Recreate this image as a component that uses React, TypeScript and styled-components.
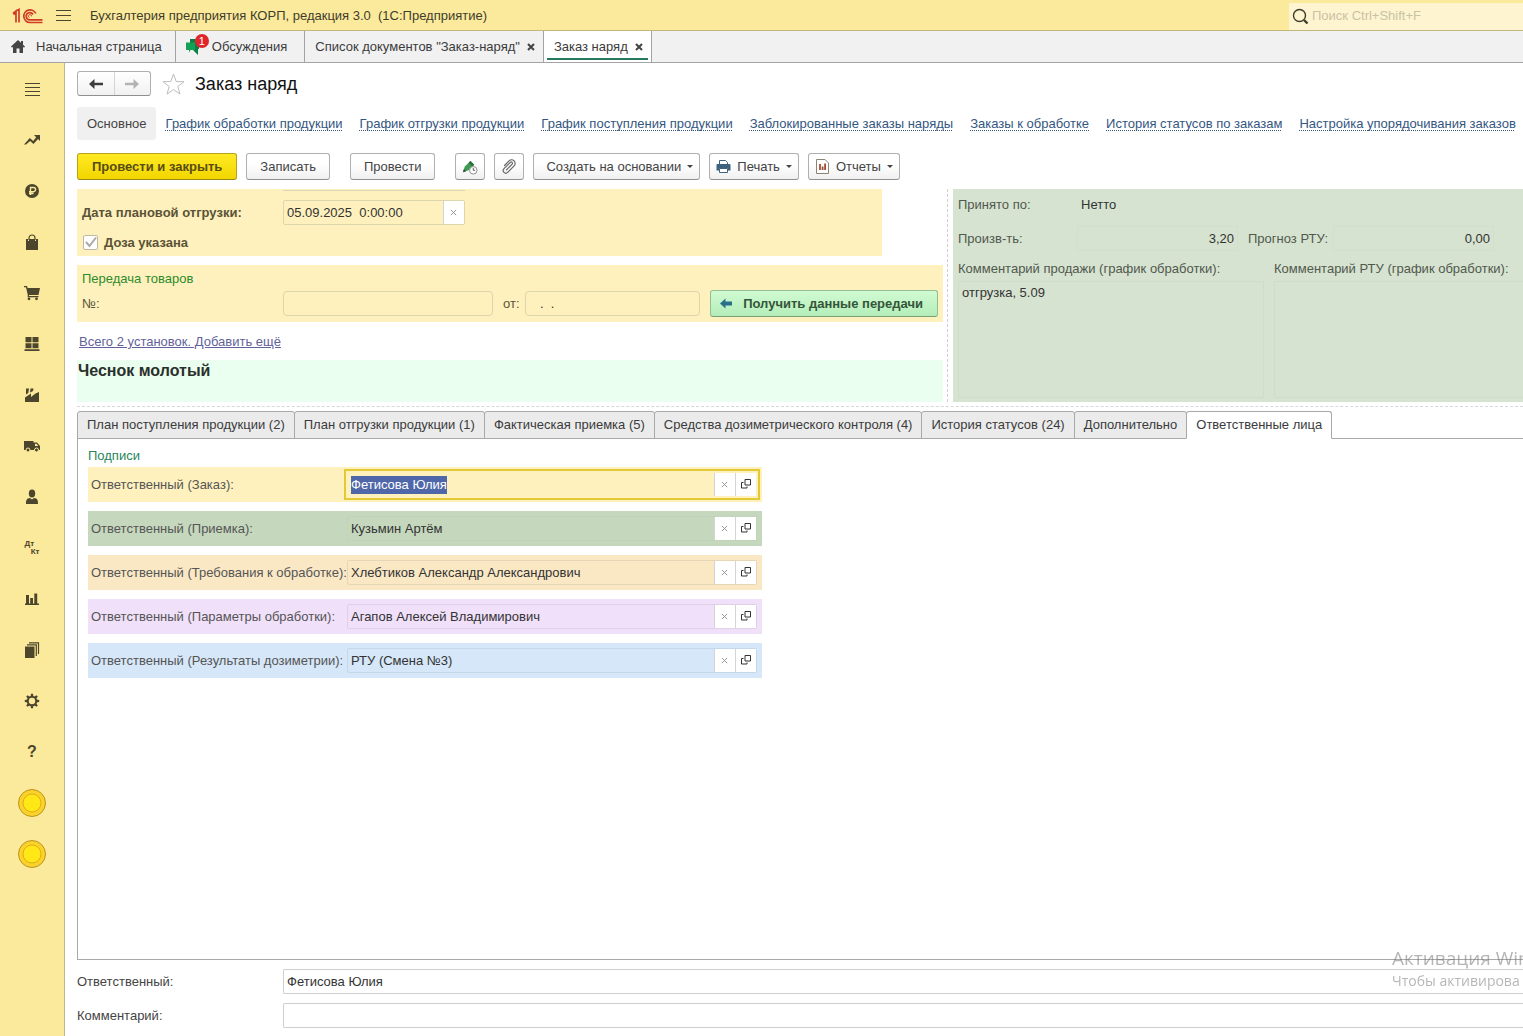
import React, { useEffect, useRef } from 'react';
import styled, { createGlobalStyle, css } from 'styled-components';

const GlobalStyle = createGlobalStyle`
  *, *::before, *::after { box-sizing: border-box; }
  body {
    margin: 0;
    background: #fff;
    color: #444;
    font: 13px/18px "Liberation Sans", Arial, sans-serif;
  }
  button, input, textarea { font: inherit; color: inherit; margin: 0; }
  button { cursor: pointer; }
  svg { display: block; flex: none; }
`;

/* ---------- frame ---------- */

const Page = styled.div`
  display: flex;
  flex-direction: column;
  min-height: 100vh;
  overflow: hidden;
`;

const TopBar = styled.header`
  display: flex;
  align-items: center;
  height: 31px;
  padding: 2px 0 0 12px;
  background: #fbea9b;
  border-bottom: 1px solid #c3b77c;
`;

const MenuButton = styled.button`
  display: flex;
  padding: 0;
  margin: 0 19px 0 13px;
  border: 0;
  background: none;
  color: #4b4733;
`;

const AppTitle = styled.div`
  flex: 1;
  white-space: pre;
  color: #3f3c2c;
`;

const SearchBox = styled.label`
  display: flex;
  align-items: center;
  gap: 3px;
  width: 234px;
  height: 27px;
  padding-left: 3px;
  background: #fef5d0;
  color: #3f3c2c;
`;

const SearchInput = styled.input`
  flex: 1;
  min-width: 0;
  padding: 0;
  border: 0;
  outline: 0;
  background: none;
  &::placeholder { color: #c9c2a4; opacity: 1; }
`;

const WindowTabs = styled.nav`
  display: flex;
  height: 32px;
  background: #f1f1f1;
  border-bottom: 1px solid #a3a3a3;
`;

const WindowTab = styled.div<{ $active?: boolean }>`
  position: relative;
  display: flex;
  align-items: center;
  padding: 0 8px 0 10px;
  border-right: 1px solid #a3a3a3;
  white-space: nowrap;
  ${p => p.$active && css`
    background: #fff;
    &::after {
      content: '';
      position: absolute;
      left: 3px;
      right: 3px;
      bottom: 2px;
      height: 2px;
      background: #26795c;
    }
  `}
`;

const TabLabel = styled.button<{ $pad?: number }>`
  display: flex;
  align-items: center;
  gap: 10px;
  padding: 0 ${p => p.$pad ?? 0}px 0 0;
  border: 0;
  background: none;
  color: #3b3b3b;
`;

const TabClose = styled.button`
  display: flex;
  padding: 0;
  margin-left: 7px;
  border: 0;
  background: none;
  color: #444;
`;

const ChatMark = styled.span`
  position: relative;
  display: block;
  width: 16px;
  height: 18px;
`;

const Count = styled.span`
  position: absolute;
  top: -4px;
  left: 9px;
  width: 14px;
  height: 14px;
  border-radius: 7px;
  background: #e0252b;
  color: #fff;
  font-size: 11px;
  line-height: 14px;
  text-align: center;
`;

const Body = styled.div`
  display: flex;
  flex: 1;
`;

const Sidebar = styled.nav`
  display: flex;
  flex: none;
  flex-direction: column;
  width: 65px;
  background: #fbea9b;
  border-right: 1px solid #bdb68f;
`;

const SideButton = styled.button`
  display: flex;
  align-items: center;
  justify-content: center;
  height: 51px;
  padding: 0;
  border: 0;
  background: none;
  color: #4b462c;
`;

const Main = styled.main`
  display: flex;
  flex: 1;
  flex-direction: column;
  min-width: 0;
  padding: 8px 0 8px 12px;
`;

/* ---------- heading, links, commands ---------- */

const Heading = styled.div`
  display: flex;
  align-items: center;
  height: 25px;
`;

const History = styled.div`
  display: flex;
  width: 74px;
  height: 25px;
  margin-right: 11px;
  border: 1px solid #b0b0b0;
  border-bottom-color: #8f8f8f;
  border-radius: 3px;
  background: linear-gradient(#fff, #f1f1f1);
`;

const HistoryButton = styled.button`
  display: flex;
  flex: 1;
  align-items: center;
  justify-content: center;
  padding: 0;
  border: 0;
  background: none;
  color: #3c3c3c;
  & + & { border-left: 1px solid #d5d5d5; color: #b3b3b3; }
`;

const Title = styled.h1`
  margin: 0 0 0 10px;
  color: #111;
  font-size: 18px;
  font-weight: 400;
  line-height: 24px;
`;

const Star = styled.button`
  display: flex;
  padding: 0;
  border: 0;
  background: none;
`;

const Sections = styled.nav`
  display: flex;
  align-items: center;
  gap: 17px;
  height: 33px;
  margin-top: 11px;
  white-space: nowrap;
`;

const CurrentSection = styled.span`
  padding: 0 9px 0 10px;
  margin-right: -7px;
  border-radius: 3px;
  background: #f0f0f0;
  line-height: 33px;
`;

const SectionLink = styled.a`
  color: #34567f;
  text-decoration: underline dotted 1px;
  text-decoration-skip-ink: none;
  text-underline-offset: 2px;
`;

const Commands = styled.div`
  display: flex;
  gap: 9px;
  margin-top: 13px;
`;

const Command = styled.button<{ $tone?: 'main' | 'green'; $gapAfter?: boolean; $square?: boolean }>`
  display: flex;
  align-items: center;
  justify-content: center;
  gap: 6px;
  height: 27px;
  padding: 0 ${p => (p.$square ? 6 : 13)}px;
  margin-right: ${p => (p.$gapAfter ? 11 : 0)}px;
  border: 1px solid #b0b0b0;
  border-bottom-color: #8f8f8f;
  border-radius: 3px;
  background: linear-gradient(#fff 40%, #f0f0f0);
  color: #444;
  white-space: nowrap;
  ${p => p.$tone === 'main' && css`
    padding: 0 14px;
    border-color: #b7a21c;
    border-bottom-color: #98860f;
    background: linear-gradient(#ffe923, #f2d600);
    color: #574c12;
    font-weight: 700;
  `}
  ${p => p.$tone === 'green' && css`
    gap: 11px;
    padding: 0 14px 0 9px;
    border-color: #93bd93;
    border-bottom-color: #76a076;
    background: linear-gradient(#d0fbd2, #b4edb9);
    color: #35553a;
    font-weight: 700;
  `}
`;

const DropCommand = styled(Command)`
  padding: 0 6px 0 ${p => (p.$square ? 6 : 12)}px;
`;

/* ---------- order form ---------- */

const FormArea = styled.section`
  display: flex;
  margin-top: 9px;
  padding-bottom: 4px;
  border-bottom: 1px dashed #d8d8d8;
`;

const OrderColumn = styled.div`
  flex: 0 0 871px;
  padding-right: 4px;
  border-right: 1px dashed #cfcfcf;
`;

const Band = styled.div<{ $inset?: boolean }>`
  display: flex;
  flex-direction: column;
  padding: ${p => (p.$inset ? '0 5px' : '5px')};
  margin-right: ${p => (p.$inset ? 61 : 0)}px;
  margin-bottom: ${p => (p.$inset ? 9 : 0)}px;
  background: #fef1bd;
`;

const FieldEdge = styled.div`
  width: 182px;
  height: 2px;
  margin: 0 0 9px 201px;
  border-bottom: 1px solid #ddd6b4;
`;

const FormRow = styled.div`
  display: flex;
  align-items: center;
`;

const RowLabel = styled.label<{ $bold?: boolean }>`
  flex: 0 0 201px;
  color: #5a5338;
  font-weight: ${p => (p.$bold ? 700 : 400)};
`;

const Field = styled.div<{ $width: number; $round?: boolean }>`
  display: flex;
  width: ${p => p.$width}px;
  height: 25px;
  border: 1px solid #ddd5ae;
  border-radius: ${p => (p.$round ? 4 : 2)}px;
`;

const TextInput = styled.input<{ $right?: boolean }>`
  flex: 1;
  width: 100%;
  min-width: 0;
  padding: 0 3px;
  border: 0;
  outline: 0;
  background: none;
  color: #333;
  text-align: ${p => (p.$right ? 'right' : 'left')};
  &::selection { background: #4f67a8; color: #fff; }
`;

const CellButton = styled.button<{ $dim?: boolean }>`
  display: flex;
  flex: 0 0 21px;
  align-items: center;
  justify-content: center;
  padding: 0 1px 1px 0;
  border: 0;
  border-left: 1px solid #d4d4d4;
  background: #fff;
  color: ${p => (p.$dim ? '#8a8a8a' : '#333')};
`;

const CheckRow = styled.label`
  display: flex;
  align-items: center;
  gap: 6px;
  padding: 9px 0 5px;
  color: #5a5338;
  font-weight: 700;
  line-height: 17px;
`;

const Check = styled.input`
  appearance: none;
  width: 15px;
  height: 15px;
  margin: 0 0 0 1px;
  border: 1px solid #bfb9a0;
  border-radius: 2px;
  background: #fff;
  &:checked {
    background: #fff url("data:image/svg+xml,%3Csvg xmlns='http://www.w3.org/2000/svg' viewBox='0 0 13 13'%3E%3Cpath d='M2 6l3.500 4L12 1.500' fill='none' stroke='%23aaa' stroke-width='2'/%3E%3C/svg%3E") center / 13px 13px no-repeat;
  }
`;

const GroupTitle = styled.h2`
  margin: 0;
  color: #2d8b2d;
  font-size: 13px;
  font-weight: 400;
  line-height: 18px;
`;

const TransferRow = styled(FormRow)`
  margin-top: 2px;
`;

const FromLabel = styled.label`
  flex: 1;
  padding-left: 10px;
  color: #5a5338;
`;

const TransferAction = styled.div`
  margin-left: 10px;
`;

const UnitsLine = styled.div`
  padding: 11px 2px 9px;
`;

const UnitsLink = styled.a`
  color: #62629a;
  text-decoration: underline;
`;

const Product = styled.div`
  min-height: 42px;
  padding-left: 1px;
  background: #eafff0;
  color: #2b2f2c;
  font-size: 16px;
  font-weight: 700;
  line-height: 21px;
`;

const PlanPanel = styled.div`
  display: flex;
  flex: 1;
  flex-direction: column;
  min-width: 0;
  margin-left: 5px;
  padding: 3px 0 4px 5px;
  background: #d6e3d0;
  color: #51584e;
`;

const PlanRow = styled.div`
  display: flex;
  align-items: center;
  height: 25px;
  margin-bottom: 9px;
`;

const PlanLabel = styled.label<{ $width: number }>`
  flex: 0 0 ${p => p.$width}px;
`;

const PlanField = styled.div<{ $plain?: boolean }>`
  display: flex;
  width: 161px;
  height: 25px;
  margin-right: 10px;
  border: 1px solid ${p => (p.$plain ? 'transparent' : '#d2dfcd')};
`;

const Comments = styled.div`
  display: grid;
  flex: 1;
  grid-template-columns: 306px 1fr;
  grid-template-rows: 18px 1fr;
  column-gap: 10px;
  row-gap: 3px;
`;

const CommentBox = styled.textarea<{ $open?: boolean }>`
  width: 100%;
  height: 100%;
  min-height: 0;
  padding: 2px 3px;
  border: 1px solid #cfdcc9;
  border-right-width: ${p => (p.$open ? 0 : 1)}px;
  outline: 0;
  resize: none;
  background: none;
  color: #333;
`;

/* ---------- tabs ---------- */

const Tabs = styled.div`
  display: flex;
  margin-top: 4px;
  white-space: nowrap;
`;

const Tab = styled.button<{ $active?: boolean }>`
  height: 28px;
  padding: 0 9px;
  margin-right: -1px;
  border: 1px solid #a8a8a8;
  border-bottom-color: ${p => (p.$active ? '#fff' : '#a8a8a8')};
  border-radius: 3px 3px 0 0;
  background: ${p => (p.$active ? '#fff' : '#ebebeb')};
  color: #3b3b3b;
`;

const TabPanel = styled.section`
  display: flex;
  flex: 1;
  flex-direction: column;
  gap: 9px;
  margin-top: -1px;
  padding: 8px 10px;
  border: 1px solid #a8a8a8;
  border-right: 0;
  position: relative;
  z-index: -1;
`;

const SignTitle = styled(GroupTitle)`
  margin-bottom: -7px;
  color: #26855a;
`;

const SignRow = styled.div<{ $bg: string }>`
  display: flex;
  align-items: center;
  width: 674px;
  height: 35px;
  padding: 0 5px 0 3px;
  background: ${p => p.$bg};
`;

const SignLabel = styled.label`
  flex: 0 0 256px;
  color: #555;
  white-space: nowrap;
`;

const SignField = styled.div<{ $line: string; $focused?: boolean }>`
  display: flex;
  width: 410px;
  height: 25px;
  border: 1px solid ${p => p.$line};
  border-radius: ${p => (p.$focused ? 0 : 2)}px;
  outline: ${p => (p.$focused ? '2px solid #e3c935' : 'none')};
  outline-offset: 1px;
`;

/* ---------- footer ---------- */

const Footer = styled.div`
  display: grid;
  grid-template-columns: 206px 1fr;
  align-items: center;
  row-gap: 9px;
  margin-top: 9px;
`;

const FooterInput = styled(TextInput)`
  height: 25px;
  border: 1px solid #cfcfcf;
  border-right: 0;
  border-radius: 2px 0 0 2px;
`;

const Watermark = styled.div`
  position: fixed;
  right: 0;
  bottom: 45px;
  width: 131px;
  color: rgba(110, 110, 110, 0.5);
  font-family: "Open Sans", "Noto Sans", sans-serif;
  font-size: 14px;
  line-height: 20px;
  white-space: nowrap;
  pointer-events: none;
`;

const WatermarkTitle = styled.div`
  font-size: 19px;
  line-height: 26px;
`;

/* ---------- drawings ---------- */

const Logo = () => (
  <svg width="31" height="17" viewBox="0 0 31 17" fill="none" stroke="#cf3b27" strokeWidth="1.700">
    <path d="M1 5.500 4 3v11.500M4 3l3-1.500v13M1.500 6.500 4 5" />
    <path d="M23.800 5.500A6.300 6.300 0 1 0 17.800 14.500H30.500" />
    <path d="M21 6.500A3.600 3.600 0 1 0 17.800 11.800H30.500" />
    <path d="M19.500 8.300a1.500 1.500 0 1 0-2 1.200" strokeWidth="1" />
  </svg>
);

const Lines = ({ rows }: { rows: number[] }) => (
  <svg width="15" height="16" viewBox="0 0 15 16" fill="currentColor">
    {rows.map(y => <rect key={y} x="0" y={y} width="15" height="1" />)}
  </svg>
);

const SearchIcon = () => (
  <svg width="17" height="17" viewBox="0 0 17 17" fill="none" stroke="currentColor">
    <circle cx="7.500" cy="7.500" r="6" strokeWidth="1.400" />
    <path d="m12 12 3.500 3.500" strokeWidth="2.400" />
  </svg>
);

const HomeIcon = () => (
  <svg width="16" height="14" viewBox="0 0 16 14" fill="#444">
    <path d="M8 0 1 6.600 2 7.700 3 6.800V13h3.500V8.500h3V13H13V6.800l1 .9 1-1.100-2-1.900V1h-2v1.800z" />
  </svg>
);

const ChatIcon = () => (
  <svg width="16" height="18" viewBox="0 0 16 18">
    <path d="M4 1h9v10h-1v6l-5-5H4z" fill="#0c7f45" />
    <path d="M0 4.500h9v7.500H4.500L3 14.500V12H0z" fill="#15a05a" />
  </svg>
);

const CrossIcon = ({ size = 8, width = 2 }: { size?: number; width?: number }) => (
  <svg width={size} height={size} viewBox="0 0 8 8" fill="none" stroke="currentColor" strokeWidth={width}>
    <path d="m1 1 6 6M7 1 1 7" />
  </svg>
);

const ArrowIcon = ({ flip }: { flip?: boolean }) => (
  <svg width="14" height="12" viewBox="0 0 14 12" fill="currentColor">
    <path d={flip ? 'M14 6 8.500 1v3.800H0v2.400h8.500V11z' : 'M0 6l5.500-5v3.800H14v2.400H5.500V11z'} />
  </svg>
);

const GetArrow = () => (
  <svg width="12" height="11" viewBox="0 0 12 11" fill="#2b7089">
    <path d="M0 5.500 5.500.5V3.500H12v4H5.500v3z" />
  </svg>
);

const StarIcon = () => (
  <svg width="23" height="22" viewBox="0 0 23 22" fill="#fff" stroke="#bdbdbd">
    <path d="m11.500 1 2.700 7.500 7.800.2-6.200 4.800 2.200 7.600-6.500-4.500L5 21.100l2.200-7.600L1 8.700l7.800-.2z" />
  </svg>
);

const PostIcon = () => (
  <svg width="16" height="16" viewBox="0 0 17 17">
    <path d="M1 14 3 8l6-6 4 4-6 6z" fill="#3f9a52" />
    <path d="M9 2l4 4-2 2-4-4z" fill="#2f7040" />
    <path d="m1 14 1-3.500L4.500 13z" fill="#38503b" />
    <circle cx="12" cy="12" r="4" fill="#fff" stroke="#888" />
    <path d="M12 9.500V12h2" fill="none" stroke="#555" />
  </svg>
);

const ClipIcon = () => (
  <svg width="16" height="16" viewBox="0 0 16 16" fill="none" stroke="#666" strokeWidth="1.200" strokeLinecap="round">
    <path d="m5.500 10.800 5.600-5.700a1.200 1.200 0 0 0-1.800-1.800L3 9.700a2.600 2.600 0 0 0 3.700 3.700l6.400-6.500a3.500 3.500 0 0 0-5-5L3.500 6.500" />
  </svg>
);

const PrintIcon = () => (
  <svg width="15" height="15" viewBox="0 0 15 15">
    <path d="M3.500 5V1.500h6l2 2V5" fill="#fff" stroke="#41627a" />
    <path d="M1.500 5h12a1 1 0 0 1 1 1v5.500h-3V9h-8v2.500h-3V6a1 1 0 0 1 1-1z" fill="#3d627d" />
    <path d="M3.500 9.500h8v4h-8z" fill="#fff" stroke="#41627a" />
  </svg>
);

const ReportIcon = () => (
  <svg width="15" height="15" viewBox="0 0 15 15">
    <path d="M1.500.5h8.500l3.500 3.500v10.500h-12z" fill="#fff" stroke="#8c8379" />
    <path d="M4 5h2v6H4z" fill="#b85c3c" />
    <path d="M6.700 7.500h1.800V11H6.700z" fill="#8f5140" />
    <path d="M9.200 4.500H11V11H9.200z" fill="#a04a34" />
  </svg>
);

const Caret = () => (
  <svg width="6" height="3" viewBox="0 0 6 3" fill="#444"><path d="M0 0h6L3 3z" /></svg>
);

const OpenIcon = () => (
  <svg width="10" height="10" viewBox="0 0 10 10" fill="none" stroke="currentColor">
    <path d="M4 .5h5.500v5.500H4zM2.500 3.500H.5v5.500h5.500V7.500" />
  </svg>
);

const side = (children: React.ReactNode) => (
  <svg width="16" height="16" viewBox="0 0 16 16" fill="currentColor">{children}</svg>
);

const Coin = () => (
  <svg width="28" height="28" viewBox="0 0 28 28">
    <circle cx="14" cy="14" r="13.500" fill="#fbd22a" stroke="#b99322" />
    <circle cx="14" cy="14" r="9" fill="#ffe815" stroke="#e0ad1c" />
  </svg>
);

const sideItems: { name: string; icon: React.ReactNode }[] = [
  { name: 'Меню', icon: <Lines rows={[2, 6, 10, 14]} /> },
  {
    name: 'Руководителю',
    icon: side(<path d="M10 3h6v6l-2-2-4.500 5-3.300-3L2 12.500H0L5.800 6l3.400 3L12.200 5.200z" />),
  },
  {
    name: 'Банк и касса',
    icon: side(<>
      <circle cx="8" cy="8" r="7" />
      <path d="M6.500 12V4.500h3a2 2 0 0 1 0 4.200H5M5 10.500h4.500" fill="none" stroke="#fbea9b" strokeWidth="1.400" />
    </>),
  },
  {
    name: 'Продажи',
    icon: side(<>
      <path d="M2 5h2v2h1V5h6v2h1V5h2v11H2z" />
      <path d="M5 6V4a3 3 0 0 1 6 0v2" fill="none" stroke="currentColor" strokeWidth="1.200" />
    </>),
  },
  {
    name: 'Покупки',
    icon: side(<>
      <path d="M0 1h3l.6 2H16l-1.500 7H5v1h9.500v1.300H3.700V9.500L2 2.300H0z" />
      <circle cx="5" cy="13.800" r="1.400" /><circle cx="12.500" cy="13.800" r="1.400" />
    </>),
  },
  {
    name: 'Склад',
    icon: side(<path d="M1.500 1h6v5.300h-6zM8.500 1h6v5.300h-6zM1.500 7.200h6v5h-6zM8.500 7.200h6v5h-6zM.5 13.200h15V15H.5z" />),
  },
  {
    name: 'Производство',
    icon: side(<path d="M2 1.500h3L4.300 6 2 7.500zM6.500 1.500h3L9 4 6 5.500zM1 15v-4.500l6-4V10l4.500-3.500L15 5v10z" />),
  },
  {
    name: 'Доставка',
    icon: side(<>
      <path d="M0 3h9.500v1.500h3.500l3 3.500v4H0z" />
      <path d="M11 5.700h1.500L14.300 8H11z" fill="#fbea9b" />
      <circle cx="4" cy="12" r="2" stroke="#fbea9b" /><circle cx="12.500" cy="12" r="2" stroke="#fbea9b" />
    </>),
  },
  {
    name: 'Зарплата и кадры',
    icon: side(<>
      <ellipse cx="8" cy="4.500" rx="3.200" ry="3.900" />
      <path d="M2 15c0-4 .5-5.500 4-6l2 1.500L10 9c3.500.5 4 2 4 6z" />
    </>),
  },
  { name: 'Операции', icon: null },
  {
    name: 'Отчеты',
    icon: side(<path d="M2 4h3v8.500h1.200V7H9v5.500h1.300V2.500h2.900v10H15V14H1v-1.500h1z" />),
  },
  {
    name: 'Справочники',
    icon: side(<>
      <path d="M1 4.500h9.500V16H1z" />
      <path d="M3 2.800h9.300V14M5 .8h9.500V12" fill="none" stroke="currentColor" strokeWidth="1.200" />
    </>),
  },
  {
    name: 'Администрирование',
    icon: side(<>
      <circle cx="8" cy="8" r="4.200" fill="none" stroke="currentColor" strokeWidth="2" />
      {[0, 45, 90, 135, 180, 225, 270, 315].map(a => (
        <path key={a} d="M7 .8h2l.4 3H6.600z" transform={`rotate(${a} 8 8)`} />
      ))}
    </>),
  },
];

const DebitCredit = styled.span`
  display: grid;
  width: 15px;
  font-size: 8px;
  font-weight: 700;
  line-height: 8px;
  text-align: left;
  span:last-child { justify-self: end; }
`;

const HelpMark = styled.span`
  font-size: 16px;
  font-weight: 700;
`;

/* ---------- data ---------- */

const sections = [
  'График обработки продукции',
  'График отгрузки продукции',
  'График поступления продукции',
  'Заблокированные заказы наряды',
  'Заказы к обработке',
  'История статусов по заказам',
  'Настройка упорядочивания заказов',
];

const tabs = [
  'План поступления продукции (2)',
  'План отгрузки продукции (1)',
  'Фактическая приемка (5)',
  'Средства дозиметрического контроля (4)',
  'История статусов (24)',
  'Дополнительно',
  'Ответственные лица',
];

const signatures = [
  { id: 'order', label: 'Ответственный (Заказ):', value: 'Фетисова Юлия', bg: '#fef1bd', line: '#fef1bd' },
  { id: 'accept', label: 'Ответственный (Приемка):', value: 'Кузьмин Артём', bg: '#c5d8bd', line: '#c1d3ba' },
  { id: 'demands', label: 'Ответственный (Требования к обработке):', value: 'Хлебтиков Александр Александрович', bg: '#fae8c5', line: '#e6d6b8' },
  { id: 'params', label: 'Ответственный (Параметры обработки):', value: 'Агапов Алексей Владимирович', bg: '#f0e0f9', line: '#dfd0e6' },
  { id: 'results', label: 'Ответственный (Результаты дозиметрии):', value: 'РТУ (Смена №3)', bg: '#d5e7f8', line: '#c6d8e8' },
];

export default function App() {
  const first = useRef<HTMLInputElement>(null);

  useEffect(() => {
    first.current?.focus();
    first.current?.select();
  }, []);

  return (
    <Page>
      <GlobalStyle />
      <TopBar>
        <Logo />
        <MenuButton aria-label="Главное меню"><Lines rows={[2, 7, 12]} /></MenuButton>
        <AppTitle>Бухгалтерия предприятия КОРП, редакция 3.0  (1С:Предприятие)</AppTitle>
        <SearchBox>
          <SearchIcon />
          <SearchInput type="search" aria-label="Поиск" placeholder="Поиск Ctrl+Shift+F" />
        </SearchBox>
      </TopBar>

      <WindowTabs>
        <WindowTab>
          <TabLabel $pad={5}><HomeIcon />Начальная страница</TabLabel>
        </WindowTab>
        <WindowTab>
          <TabLabel $pad={9}>
            <ChatMark><ChatIcon /><Count>1</Count></ChatMark>
            Обсуждения
          </TabLabel>
        </WindowTab>
        <WindowTab>
          <TabLabel>Список документов "Заказ-наряд"</TabLabel>
          <TabClose aria-label="Закрыть список"><CrossIcon /></TabClose>
        </WindowTab>
        <WindowTab $active>
          <TabLabel>Заказ наряд</TabLabel>
          <TabClose aria-label="Закрыть заказ"><CrossIcon /></TabClose>
        </WindowTab>
      </WindowTabs>

      <Body>
        <Sidebar>
          {sideItems.map(item => (
            <SideButton key={item.name} aria-label={item.name}>
              {item.icon ?? <DebitCredit><span>Дт</span><span>Кт</span></DebitCredit>}
            </SideButton>
          ))}
          <SideButton><HelpMark>?</HelpMark></SideButton>
          <SideButton aria-label="Сервис 1"><Coin /></SideButton>
          <SideButton aria-label="Сервис 2"><Coin /></SideButton>
        </Sidebar>

        <Main>
          <Heading>
            <History>
              <HistoryButton aria-label="Назад"><ArrowIcon /></HistoryButton>
              <HistoryButton aria-label="Вперед"><ArrowIcon flip /></HistoryButton>
            </History>
            <Star aria-label="В избранное"><StarIcon /></Star>
            <Title>Заказ наряд</Title>
          </Heading>

          <Sections>
            <CurrentSection>Основное</CurrentSection>
            {sections.map(s => <SectionLink key={s} href="#">{s}</SectionLink>)}
          </Sections>

          <Commands>
            <Command $tone="main">Провести и закрыть</Command>
            <Command $gapAfter>Записать</Command>
            <Command $gapAfter>Провести</Command>
            <Command $square aria-label="Отложенное проведение"><PostIcon /></Command>
            <Command $square aria-label="Файлы"><ClipIcon /></Command>
            <DropCommand>Создать на основании<Caret /></DropCommand>
            <DropCommand $square><PrintIcon />Печать<Caret /></DropCommand>
            <DropCommand $square><ReportIcon />Отчеты<Caret /></DropCommand>
          </Commands>

          <FormArea>
            <OrderColumn>
              <Band $inset>
                <FieldEdge />
                <FormRow>
                  <RowLabel $bold htmlFor="ship">Дата плановой отгрузки:</RowLabel>
                  <Field $width={182}>
                    <TextInput id="ship" defaultValue="05.09.2025  0:00:00" />
                    <CellButton $dim aria-label="Очистить дату"><CrossIcon size={7} width={1} /></CellButton>
                  </Field>
                </FormRow>
                <CheckRow>
                  <Check type="checkbox" defaultChecked />
                  Доза указана
                </CheckRow>
              </Band>

              <Band>
                <GroupTitle>Передача товаров</GroupTitle>
                <TransferRow>
                  <RowLabel htmlFor="num">№:</RowLabel>
                  <Field $width={210} $round><TextInput id="num" /></Field>
                  <FromLabel htmlFor="from">от:</FromLabel>
                  <Field $width={175} $round><TextInput id="from" defaultValue="   .  ." /></Field>
                  <TransferAction>
                    <Command $tone="green"><GetArrow />Получить данные передачи</Command>
                  </TransferAction>
                </TransferRow>
              </Band>

              <UnitsLine><UnitsLink href="#">Всего 2 установок. Добавить ещё</UnitsLink></UnitsLine>
              <Product>Чеснок молотый</Product>
            </OrderColumn>

            <PlanPanel>
              <PlanRow>
                <PlanLabel $width={119} htmlFor="by">Принято по:</PlanLabel>
                <PlanField $plain><TextInput id="by" defaultValue="Нетто" /></PlanField>
              </PlanRow>
              <PlanRow>
                <PlanLabel $width={119} htmlFor="rate">Произв-ть:</PlanLabel>
                <PlanField><TextInput id="rate" $right defaultValue="3,20" /></PlanField>
                <PlanLabel $width={85} htmlFor="rtu">Прогноз РТУ:</PlanLabel>
                <PlanField><TextInput id="rtu" $right defaultValue="0,00" /></PlanField>
              </PlanRow>
              <Comments>
                <label htmlFor="c1">Комментарий продажи (график обработки):</label>
                <label htmlFor="c2">Комментарий РТУ (график обработки):</label>
                <CommentBox id="c1" defaultValue="отгрузка, 5.09" />
                <CommentBox id="c2" $open />
              </Comments>
            </PlanPanel>
          </FormArea>

          <Tabs role="tablist">
            {tabs.map((t, i) => (
              <Tab key={t} role="tab" aria-selected={i === 6} $active={i === 6}>{t}</Tab>
            ))}
          </Tabs>
          <TabPanel>
            <SignTitle>Подписи</SignTitle>
            {signatures.map((s, i) => (
              <SignRow key={s.id} $bg={s.bg}>
                <SignLabel htmlFor={s.id}>{s.label}</SignLabel>
                <SignField $line={s.line} $focused={i === 0}>
                  <TextInput id={s.id} ref={i === 0 ? first : undefined} defaultValue={s.value} />
                  <CellButton $dim aria-label="Очистить"><CrossIcon size={7} width={1} /></CellButton>
                  <CellButton aria-label="Открыть"><OpenIcon /></CellButton>
                </SignField>
              </SignRow>
            ))}
          </TabPanel>

          <Footer>
            <label htmlFor="resp">Ответственный:</label>
            <FooterInput id="resp" defaultValue="Фетисова Юлия" />
            <label htmlFor="note">Комментарий:</label>
            <FooterInput id="note" />
          </Footer>
        </Main>
      </Body>

      <Watermark>
        <WatermarkTitle>Активация Win</WatermarkTitle>
        <div>Чтобы активирова</div>
      </Watermark>
    </Page>
  );
}
